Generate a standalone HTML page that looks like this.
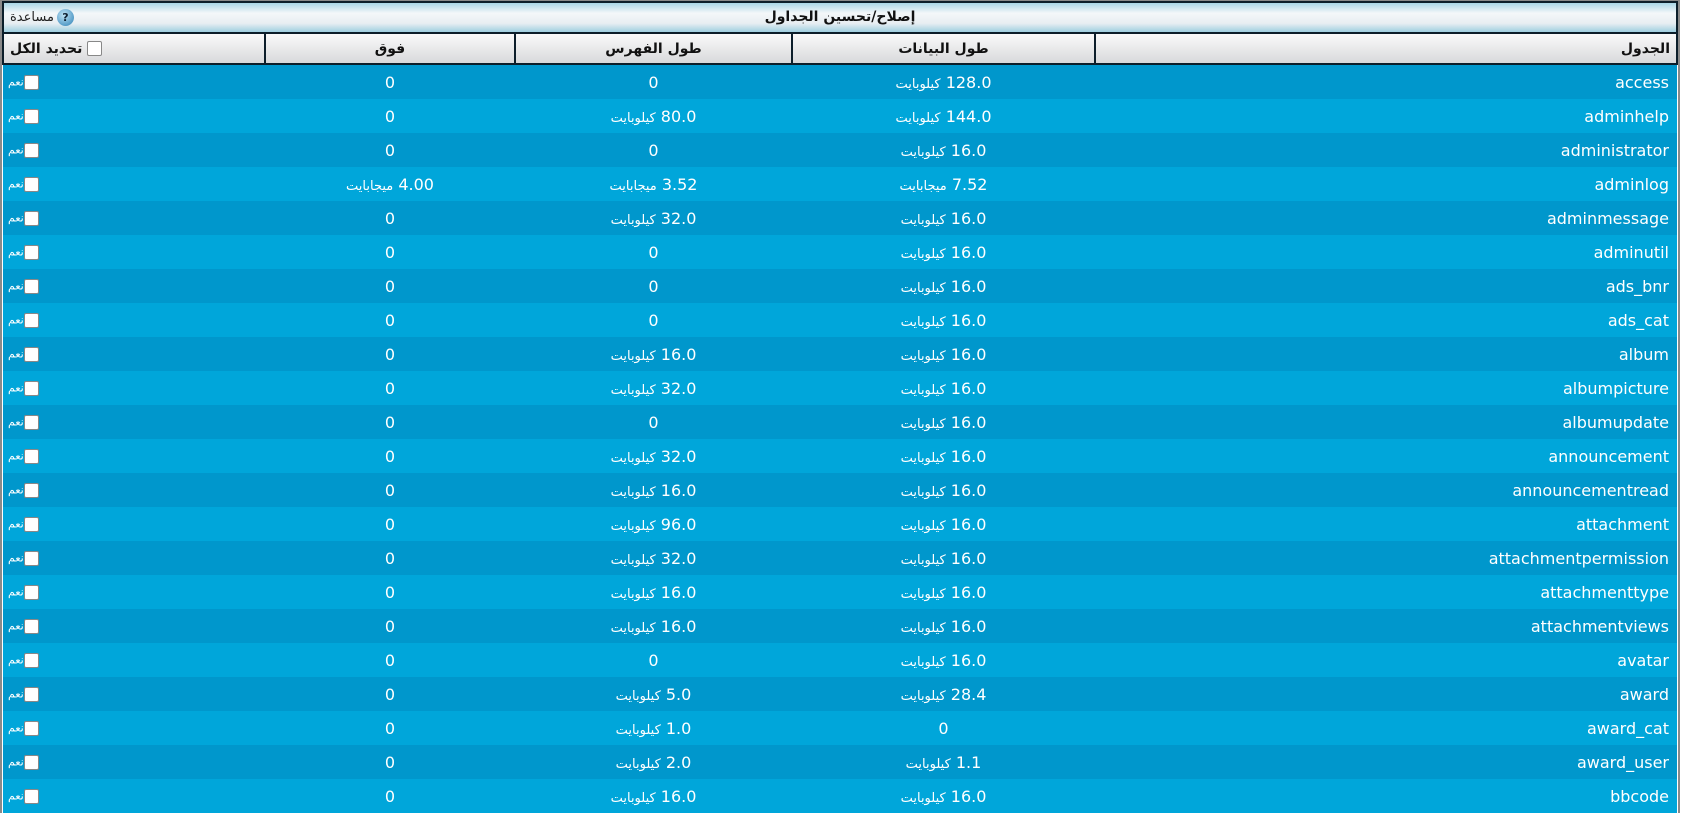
<!DOCTYPE html>
<html dir="rtl"><head><meta charset="utf-8"><style>
body{margin:0;background:#fff;width:1684px;height:801px;overflow:hidden;font-family:"DejaVu Sans","Noto Sans CJK SC",sans-serif;}
.wrap{position:absolute;left:0;top:0;border-left:2px solid #8a8a8a;border-right:2px solid #8a8a8a;border-top:1px solid #8a8a8a;box-sizing:border-box;width:1680px}
.title{height:29px;border:2px solid #0c1e2a;background:linear-gradient(#a9d6e6,#f4f7f9 35%,#e8eef2 70%,#9fcfe0);position:relative;font-size:14px;font-weight:bold;line-height:29px;text-align:center;color:#111}
.help{position:absolute;left:6px;top:0;font-size:13px;font-weight:normal;color:#222}
.help i{display:inline-block;width:17px;height:17px;border-radius:50%;background:radial-gradient(circle at 40% 35%,#bfe3f5,#2b7fb5);color:#123;font-style:normal;font-weight:bold;font-size:11px;line-height:17px;text-align:center;vertical-align:middle;margin-left:3px}
table{border-collapse:collapse;width:100%;table-layout:fixed}
th{height:29px;border:2px solid #0c1e2a;border-top:0;background:linear-gradient(#fafafa,#d8d9db);font-size:14px;font-weight:bold;color:#111;padding:0}
td{height:34px;padding:0;color:#fff;font-size:16px;text-align:center}
tr.d td{background:#0097cc}tr.l td{background:#00a6da}
td.n{text-align:right;padding-right:8px}
td.c{text-align:left;padding-left:5px;font-size:11px}
.cb{display:inline-block;width:13px;height:13px;background:#fff;border:1px solid #888;border-radius:2px;vertical-align:middle;margin-right:2px}
small{font-size:13px}
</style></head><body><div class="wrap">
<div class="title">إصلاح/تحسين الجداول<span class="help"><i>?</i>مساعدة</span></div>
<table><colgroup><col style="width:582px"><col style="width:303px"><col style="width:277px"><col style="width:250px"><col></colgroup>
<tr><th style="text-align:right;padding-right:6px">الجدول</th><th>طول البيانات</th><th>طول الفهرس</th><th>فوق</th><th style="text-align:left;padding-left:6px"><span class="cb"></span> تحديد الكل</th></tr>
<tbody id="b"></tbody></table></div>
<script>
var r=[["access","128.0 كيلوبايت","0","0"],["adminhelp","144.0 كيلوبايت","80.0 كيلوبايت","0"],["administrator","16.0 كيلوبايت","0","0"],["adminlog","7.52 ميجابايت","3.52 ميجابايت","4.00 ميجابايت"],["adminmessage","16.0 كيلوبايت","32.0 كيلوبايت","0"],["adminutil","16.0 كيلوبايت","0","0"],["ads_bnr","16.0 كيلوبايت","0","0"],["ads_cat","16.0 كيلوبايت","0","0"],["album","16.0 كيلوبايت","16.0 كيلوبايت","0"],["albumpicture","16.0 كيلوبايت","32.0 كيلوبايت","0"],["albumupdate","16.0 كيلوبايت","0","0"],["announcement","16.0 كيلوبايت","32.0 كيلوبايت","0"],["announcementread","16.0 كيلوبايت","16.0 كيلوبايت","0"],["attachment","16.0 كيلوبايت","96.0 كيلوبايت","0"],["attachmentpermission","16.0 كيلوبايت","32.0 كيلوبايت","0"],["attachmenttype","16.0 كيلوبايت","16.0 كيلوبايت","0"],["attachmentviews","16.0 كيلوبايت","16.0 كيلوبايت","0"],["avatar","16.0 كيلوبايت","0","0"],["award","28.4 كيلوبايت","5.0 كيلوبايت","0"],["award_cat","0","1.0 كيلوبايت","0"],["award_user","1.1 كيلوبايت","2.0 كيلوبايت","0"],["bbcode","16.0 كيلوبايت","16.0 كيلوبايت","0"]];
function f(s){var p=s.split(" ");return p.length>1?p[0]+" <small>"+p[1]+"</small>":s}
var h="";r.forEach(function(x,i){h+='<tr class="'+(i%2?"l":"d")+'"><td class="n">'+x[0]+'</td><td>'+f(x[1])+'</td><td>'+f(x[2])+'</td><td>'+f(x[3])+'</td><td class="c"><span class="cb"></span>نعم</td></tr>'});
document.getElementById("b").innerHTML=h;
</script></body></html>
